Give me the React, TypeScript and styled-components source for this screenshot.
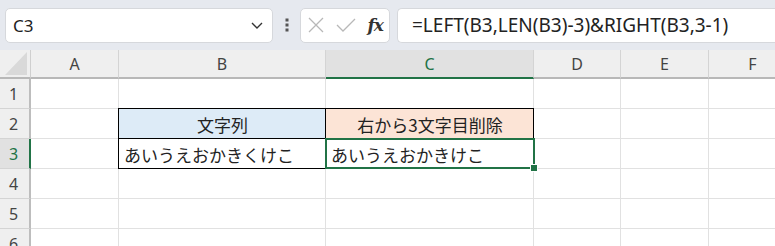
import React from 'react';
import styled, { createGlobalStyle, css } from 'styled-components';

// ============================================
// STYLES GLOBAUX
// ============================================

const GlobalStyle = createGlobalStyle`
  html, body {
    margin: 0;
    padding: 0;
    background: #ffffff;
    overflow: hidden;
  }
  body {
    font-family: "Noto Sans", "Noto Sans CJK JP", sans-serif;
  }
`;

const GREEN = '#217346';
const GRID = '#e1e1e1';

// ============================================
// BARRE DE FORMULE
// ============================================

const FormulaBar = styled.div`
  display: flex;
  align-items: center;
  height: 50px;
  padding: 0 0 0 5px;
  background: #e6e9ef;
  box-sizing: border-box;
`;

const Box = styled.div`
  height: 35px;
  box-sizing: border-box;
  background: #ffffff;
  border: 1px solid #d6d8dc;
  border-radius: 5px;
  display: flex;
  align-items: center;
`;

const NameBox = styled(Box)`
  width: 268px;
  padding: 0 8px 0 7px;
  justify-content: space-between;
  font-size: 17px;
  color: #222;
`;

const Dots = styled.div`
  width: 27px;
  display: flex;
  justify-content: center;
`;

const FxBox = styled(Box)`
  width: 90px;
  padding: 0 6px 0 6px;
  justify-content: space-between;
  margin-right: 7px;
`;

const Fx = styled.span`
  font-family: "DejaVu Serif", "Liberation Serif", serif;
  font-style: italic;
  font-weight: bold;
  font-size: 17px;
  color: #333;
  letter-spacing: -1px;
`;

const FormulaInput = styled(Box)`
  flex: 1;
  padding-left: 14px;
  border-right: none;
  border-top-right-radius: 0;
  border-bottom-right-radius: 0;
  font-size: 19px;
  color: #222;
  white-space: nowrap;
`;

// ============================================
// FEUILLE
// ============================================

const Sheet = styled.div`
  display: grid;
  grid-template-columns: 31px 88px 207px 208px 87px 88px 88px;
  grid-template-rows: 29px repeat(6, 30px);
  width: 797px;
`;

const Corner = styled.div`
  background: #efefef;
  border-right: 1px solid #cfcfcf;
  border-bottom: 2px solid #b8b8b8;
  box-sizing: border-box;
  display: flex;
  align-items: flex-end;
  justify-content: flex-end;
  padding: 0 3px 2px 0;
`;

const ColHead = styled.div<{ $active?: boolean }>`
  background: ${(p) => (p.$active ? '#e1e1e1' : '#efefef')};
  color: ${(p) => (p.$active ? GREEN : '#444')};
  border-right: 1px solid #d4d4d4;
  border-bottom: 2px solid ${(p) => (p.$active ? GREEN : '#b8b8b8')};
  box-sizing: border-box;
  display: flex;
  align-items: center;
  justify-content: center;
  font-size: 16px;
  padding-top: 1px;
`;

const RowHead = styled.div<{ $active?: boolean }>`
  background: ${(p) => (p.$active ? '#e1e1e1' : '#efefef')};
  color: ${(p) => (p.$active ? GREEN : '#444')};
  border-right: 2px solid ${(p) => (p.$active ? GREEN : '#bdbdbd')};
  border-bottom: 1px solid #d4d4d4;
  box-sizing: border-box;
  display: flex;
  align-items: center;
  justify-content: center;
  font-size: 16px;
  padding-right: 2px;
`;

const Cell = styled.div<{ $bg?: string; $boxed?: boolean; $center?: boolean; $selected?: boolean }>`
  position: relative;
  box-sizing: border-box;
  border-right: 1px solid ${GRID};
  border-bottom: 1px solid ${GRID};
  background: ${(p) => p.$bg || '#ffffff'};
  display: flex;
  align-items: center;
  justify-content: ${(p) => (p.$center ? 'center' : 'flex-start')};
  padding: 1px 4px 0 5px;
  font-family: "Noto Sans CJK JP", "Noto Sans", sans-serif;
  font-size: 17px;
  color: #222;
  white-space: nowrap;

  ${(p) =>
    p.$boxed &&
    css`
      &::after {
        content: '';
        position: absolute;
        top: -1px;
        left: -1px;
        right: -1px;
        bottom: -1px;
        border: 1px solid #000;
        pointer-events: none;
      }
    `}

  ${(p) =>
    p.$selected &&
    css`
      &::before {
        content: '';
        position: absolute;
        top: -1px;
        left: -1px;
        right: -2px;
        bottom: -1px;
        border: 2px solid ${GREEN};
        z-index: 2;
        pointer-events: none;
      }
    `}
`;

const Handle = styled.span`
  position: absolute;
  right: -5px;
  bottom: -4px;
  width: 6px;
  height: 6px;
  background: ${GREEN};
  border: 1px solid #ffffff;
  z-index: 3;
`;

// ============================================
// ICÔNES
// ============================================

const Chevron = () => (
  <svg width="14" height="14" viewBox="0 0 14 14">
    <path d="M2 5 L7 10 L12 5" fill="none" stroke="#333" strokeWidth="1.4" />
  </svg>
);

const VDots = () => (
  <svg width="4" height="14" viewBox="0 0 4 14">
    <rect x="0.5" y="0.5" width="3" height="3" fill="#555" />
    <rect x="0.5" y="5.5" width="3" height="3" fill="#555" />
    <rect x="0.5" y="10.5" width="3" height="3" fill="#555" />
  </svg>
);

const Cross = () => (
  <svg width="18" height="18" viewBox="0 0 18 18">
    <path d="M2 2 L16 16 M16 2 L2 16" stroke="#b8b8b8" strokeWidth="1.3" fill="none" />
  </svg>
);

const Check = () => (
  <svg width="20" height="16" viewBox="0 0 20 16">
    <path d="M1 8 L7 14 L19 2" stroke="#b8b8b8" strokeWidth="1.3" fill="none" />
  </svg>
);

const CornerTri = () => (
  <svg width="22" height="23" viewBox="0 0 22 23">
    <polygon points="22,0 22,23 0,23" fill="#d9d9d9" />
  </svg>
);

// ============================================
// DONNÉES
// ============================================

const COLS = ['A', 'B', 'C', 'D', 'E', 'F'];
const ROWS = [1, 2, 3, 4, 5, 6];

type CellSpec = { text?: string; bg?: string; boxed?: boolean; center?: boolean; selected?: boolean };

const CELLS: Record<string, CellSpec> = {
  B2: { text: '文字列', bg: '#ddebf7', boxed: true, center: true },
  C2: { text: '右から3文字目削除', bg: '#fce4d6', boxed: true, center: true },
  B3: { text: 'あいうえおかきくけこ', boxed: true },
  C3: { text: 'あいうえおかきけこ', selected: true },
};

export default function App() {
  return (
    <>
      <GlobalStyle />
      <FormulaBar>
        <NameBox>
          <span>C3</span>
          <Chevron />
        </NameBox>
        <Dots>
          <VDots />
        </Dots>
        <FxBox>
          <Cross />
          <Check />
          <Fx>fx</Fx>
        </FxBox>
        <FormulaInput>=LEFT(B3,LEN(B3)-3)&amp;RIGHT(B3,3-1)</FormulaInput>
      </FormulaBar>
      <Sheet>
        <Corner>
          <CornerTri />
        </Corner>
        {COLS.map((c) => (
          <ColHead key={c} $active={c === 'C'}>
            {c}
          </ColHead>
        ))}
        {ROWS.map((r) => (
          <React.Fragment key={r}>
            <RowHead $active={r === 3}>{r}</RowHead>
            {COLS.map((c) => {
              const spec = CELLS[`${c}${r}`] || {};
              return (
                <Cell
                  key={c}
                  $bg={spec.bg}
                  $boxed={spec.boxed}
                  $center={spec.center}
                  $selected={spec.selected}
                >
                  {spec.text}
                  {spec.selected && <Handle />}
                </Cell>
              );
            })}
          </React.Fragment>
        ))}
      </Sheet>
    </>
  );
}
